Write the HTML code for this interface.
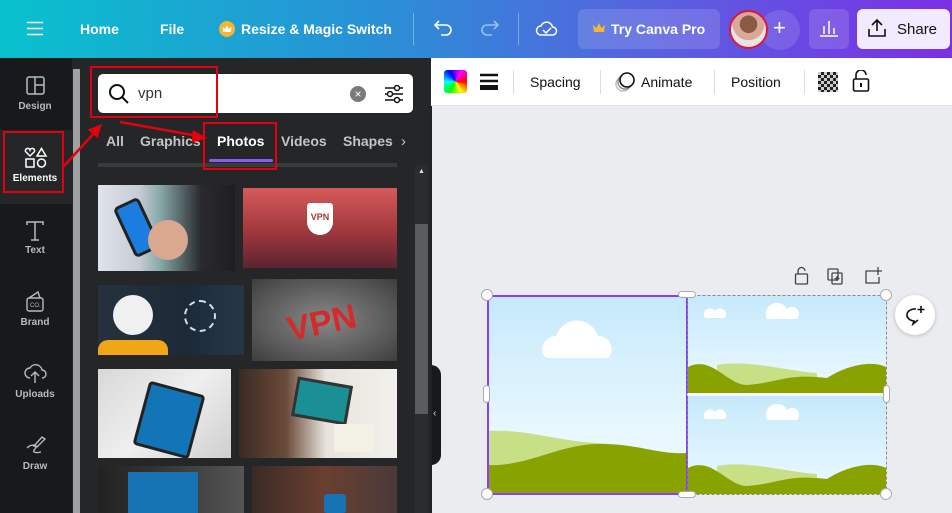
<!DOCTYPE html>
<html><head><meta charset="utf-8"><style>
*{box-sizing:border-box;margin:0;padding:0}
body{width:952px;height:513px;overflow:hidden;font-family:"Liberation Sans",sans-serif;background:#ebecf0;position:relative}
.abs{position:absolute}
.top{left:0;top:0;width:952px;height:58px;background:linear-gradient(90deg,#08c1cd 0%,#2a8fd6 40%,#5a5fe0 70%,#7b2fe6 100%);color:#fff;font-weight:bold;font-size:14px}
.top span{position:absolute;top:21px}
.side{left:0;top:58px;width:72px;height:455px;background:#18191b}
.si{position:absolute;left:0;width:70px;text-align:center;color:#b9babd;font-size:10px;font-weight:bold}
.panel{left:80px;top:58px;width:351px;height:455px;background:#252627}
.img{position:absolute}
.tab{position:absolute;top:133px;color:#c3c4c7;font-weight:bold;font-size:14px}
.red{position:absolute;border:2px solid #e3000f}
.tb{position:absolute;top:74px;font-size:14px;color:#111}
.div{position:absolute;width:1px;background:#ddd}
.h{position:absolute;width:12px;height:12px;border-radius:50%;background:#fff;border:1px solid #aaa}
</style></head><body>
<div class="abs top">
  <svg class="abs" style="left:27px;top:21px" width="16" height="15"><path d="M0 1.5H16M0 7.5H16M0 13.5H16" stroke="#fff" stroke-width="1.6"/></svg>
  <span style="left:80px">Home</span>
  <span style="left:160px">File</span>
  <div class="abs" style="left:219px;top:21px;width:16px;height:16px;border-radius:50%;background:#f5b731"><svg width="16" height="16"><path d="M4 11L3.5 5.5 6 8 8 4.5 10 8 12.5 5.5 12 11Z" fill="#fff"/></svg></div>
  <span style="left:241px">Resize &amp; Magic Switch</span>
  <div class="abs" style="left:413px;top:13px;width:1px;height:32px;background:rgba(255,255,255,.35)"></div>
  <svg class="abs" style="left:433px;top:19px" width="20" height="18"><path d="M6 2L2 6 6 10M2 6H13a5 5 0 0 1 0 10H8" fill="none" stroke="#fff" stroke-width="1.6"/></svg>
  <svg class="abs" style="left:480px;top:19px" width="20" height="18"><path d="M14 2L18 6 14 10M18 6H7a5 5 0 0 0 0 10H12" fill="none" stroke="rgba(255,255,255,.5)" stroke-width="1.6"/></svg>
  <div class="abs" style="left:518px;top:13px;width:1px;height:32px;background:rgba(255,255,255,.35)"></div>
  <svg class="abs" style="left:535px;top:18px" width="24" height="20"><path d="M6 17a4.5 4.5 0 0 1 0-9 6 6 0 0 1 11.5 1 4 4 0 0 1 0 8Z M8 12l3 3 5-5" fill="none" stroke="#fff" stroke-width="1.5"/></svg>
  <div class="abs" style="left:578px;top:9px;width:142px;height:40px;border-radius:6px;background:rgba(255,255,255,.14)"></div>
  <svg class="abs" style="left:592px;top:22px" width="14" height="12"><path d="M2 10L1 3 4.5 6 7 1 9.5 6 13 3 12 10Z" fill="#f5b731"/></svg>
  <span style="left:611px">Try Canva Pro</span>
  <div class="abs" style="left:760px;top:10px;width:40px;height:40px;border-radius:50%;background:rgba(255,255,255,.12)"></div>
  <span style="left:773px;top:15px;font-size:22px;font-weight:normal">+</span>
  <div class="abs" style="left:729px;top:10px;width:39px;height:39px;border-radius:50%;border:2px solid #e0153a;background:radial-gradient(circle at 50% 35%,#8a5a45 0 30%,#d9a89a 31% 55%,#e9e4e4 56%)"></div>
  <div class="abs" style="left:809px;top:9px;width:40px;height:40px;border-radius:6px;background:rgba(255,255,255,.14)"></div>
  <svg class="abs" style="left:819px;top:19px" width="20" height="18"><path d="M1 17H19M5 15V7M10 15V2M15 15V9" stroke="#fff" stroke-width="1.5"/></svg>
  <div class="abs" style="left:857px;top:9px;width:93px;height:40px;border-radius:6px;background:#f1ebfd"></div>
  <svg class="abs" style="left:867px;top:18px" width="20" height="20"><path d="M2 11V18H18V11M10 13V2M5 7L10 2 15 7" fill="none" stroke="#111" stroke-width="1.6"/></svg>
  <span style="left:897px;color:#111;font-weight:normal;font-size:15px">Share</span>
</div>

<div class="abs side">
  <div class="abs" style="left:0;top:146px;width:72px;height:309px;background:#18191b;border-top-right-radius:10px"></div>
  <div class="abs" style="left:0;top:72px;width:72px;height:74px;background:#252627"></div>
  <svg class="abs" style="left:26px;top:18px" width="19" height="19"><rect x="1" y="1" width="17" height="17" rx="2" fill="none" stroke="#b9babd" stroke-width="1.5"/><path d="M9 1V18M9 9H18" stroke="#b9babd" stroke-width="1.5"/></svg>
  <div class="si" style="top:43px">Design</div>
  <svg class="abs" style="left:24px;top:89px" width="24" height="22"><path d="M6 9L1.5 4.5a2.3 2.3 0 0 1 4.5-1.5 2.3 2.3 0 0 1 4.5 1.5Z M17.5 1.5L22 9H13Z" fill="none" stroke="#fff" stroke-width="1.5"/><rect x="2" y="12" width="8" height="8" fill="none" stroke="#fff" stroke-width="1.5"/><circle cx="17.5" cy="16" r="4" fill="none" stroke="#fff" stroke-width="1.5"/></svg>
  <div class="si" style="top:115px;color:#fff">Elements</div>
  <svg class="abs" style="left:26px;top:163px" width="18" height="20"><path d="M1 4V1H17V4M9 1V19M5 19H13" fill="none" stroke="#b9babd" stroke-width="1.5"/></svg>
  <div class="si" style="top:187px">Text</div>
  <svg class="abs" style="left:25px;top:232px" width="20" height="24"><path d="M4 8L13 2 15 8" fill="none" stroke="#b9babd" stroke-width="1.4"/><rect x="2" y="8" width="16" height="13" rx="2" fill="none" stroke="#b9babd" stroke-width="1.4"/><text x="5" y="17" font-size="6" fill="#b9babd">CO.</text></svg>
  <div class="si" style="top:259px">Brand</div>
  <svg class="abs" style="left:23px;top:304px" width="24" height="22"><path d="M7 16a5 5 0 0 1 0-10 6.5 6.5 0 0 1 12 2 4 4 0 0 1 0 8M12 21V11M8 14L12 10 16 14" fill="none" stroke="#b9babd" stroke-width="1.4"/></svg>
  <div class="si" style="top:331px">Uploads</div>
  <svg class="abs" style="left:25px;top:376px" width="22" height="22"><path d="M2 14C6 10 14 10 10 15 6 19 12 19 16 18M9 12L17 3 20 5 12 13Z" fill="none" stroke="#b9babd" stroke-width="1.4"/></svg>
  <div class="si" style="top:403px">Draw</div>
</div>
<div class="abs" style="left:72px;top:58px;width:8px;height:455px;background:#252627"></div>
<div class="abs" style="left:73px;top:69px;width:7px;height:444px;background:#9fa0a2"></div>

<div class="abs panel"></div>
<div class="abs" style="left:98px;top:74px;width:315px;height:39px;border-radius:5px;background:#fff"></div>
<svg class="abs" style="left:108px;top:83px" width="22" height="22"><circle cx="9" cy="9" r="7" fill="none" stroke="#111" stroke-width="2"/><path d="M14 14L20 20" stroke="#111" stroke-width="2"/></svg>
<div class="abs" style="left:138px;top:85px;font-size:15px;color:#333">vpn</div>
<div class="abs" style="left:350px;top:86px;width:16px;height:16px;border-radius:50%;background:#7a7a7a;color:#fff;font-size:12px;text-align:center;line-height:16px">×</div>
<svg class="abs" style="left:384px;top:84px" width="20" height="20"><path d="M1 4H19M1 10H19M1 16H19" stroke="#111" stroke-width="1.5"/><circle cx="13" cy="4" r="2.5" fill="#fff" stroke="#111" stroke-width="1.5"/><circle cx="6" cy="10" r="2.5" fill="#fff" stroke="#111" stroke-width="1.5"/><circle cx="13" cy="16" r="2.5" fill="#fff" stroke="#111" stroke-width="1.5"/></svg>
<div class="tab" style="left:106px">All</div>
<div class="tab" style="left:140px">Graphics</div>
<div class="tab" style="left:217px;color:#fff">Photos</div>
<div class="tab" style="left:281px">Videos</div>
<div class="tab" style="left:343px">Shapes</div>
<div class="abs" style="left:401px;top:133px;color:#c3c4c7;font-size:15px">›</div>
<div class="abs" style="left:209px;top:159px;width:64px;height:3px;border-radius:2px;background:#8b5cf6"></div>
<div class="abs" style="left:98px;top:163px;width:299px;height:4px;background:#3a3b3d"></div>
<div class="abs" style="left:415px;top:165px;width:13px;height:348px;background:#2b2c2e"></div>
<div class="abs" style="left:415px;top:224px;width:13px;height:190px;background:#5b5c5e"></div>
<div class="abs" style="left:418px;top:168px;color:#ddd;font-size:7px">▲</div>

<div class="img" style="left:98px;top:185px;width:137px;height:86px;background:linear-gradient(90deg,#dfe3ea 0%,#c7ccd4 30%,#8aa 45%,#2a2a2f 75%,#1e1e22)"><div class="abs" style="left:25px;top:15px;width:28px;height:55px;background:#1b7de0;border:3px solid #222;border-radius:5px;transform:rotate(-25deg)"></div><div class="abs" style="left:50px;top:35px;width:40px;height:40px;border-radius:50%;background:#d9a88e"></div></div>
<div class="img" style="left:243px;top:188px;width:154px;height:80px;background:linear-gradient(180deg,#d65a5a,#a0373d 55%,#5a2430)"><div class="abs" style="left:64px;top:15px;width:26px;height:32px;background:#fff;border-radius:3px 3px 13px 13px;font-size:9px;font-weight:bold;text-align:center;line-height:28px;color:#a33">VPN</div></div>
<div class="img" style="left:98px;top:285px;width:146px;height:70px;background:linear-gradient(90deg,#26313c,#1c2a38 60%,#273646)"><div class="abs" style="left:15px;top:10px;width:40px;height:40px;border-radius:50%;background:#f0f0f0"></div><div class="abs" style="left:0;top:55px;width:70px;height:15px;background:#f0a616;border-radius:10px 10px 0 0"></div><div class="abs" style="left:86px;top:15px;width:32px;height:32px;border-radius:50%;border:2px dashed #cde"></div></div>
<div class="img" style="left:252px;top:279px;width:145px;height:82px;background:radial-gradient(ellipse at 50% 50%,#888,#555 70%,#3d3d3d)"><div class="abs" style="left:35px;top:25px;color:#d42a2a;font-weight:bold;font-size:34px;transform:rotate(-12deg)">VPN</div></div>
<div class="img" style="left:98px;top:369px;width:133px;height:89px;background:linear-gradient(135deg,#d8d8d8,#efefef 50%,#cfcfcf)"><div class="abs" style="left:42px;top:18px;width:58px;height:66px;background:#1474b8;border:3px solid #222;border-radius:4px;transform:rotate(15deg)"></div></div>
<div class="img" style="left:239px;top:369px;width:158px;height:89px;background:linear-gradient(90deg,#3a2a22 0%,#6b4b3a 30%,#e8e4dc 55%,#f2f0ec)"><div class="abs" style="left:55px;top:12px;width:56px;height:40px;background:#1a8f96;border:3px solid #333;transform:rotate(10deg)"></div><div class="abs" style="left:95px;top:55px;width:40px;height:28px;background:#f3f0e6"></div></div>
<div class="img" style="left:98px;top:466px;width:146px;height:47px;background:linear-gradient(90deg,#222,#333 40%,#555)"><div class="abs" style="left:30px;top:6px;width:70px;height:41px;background:#1674b4"></div></div>
<div class="img" style="left:252px;top:466px;width:145px;height:47px;background:linear-gradient(90deg,#3a2a26,#6a3f30 50%,#4a3a3a)"><div class="abs" style="left:72px;top:28px;width:22px;height:19px;background:#1674b4;border-radius:3px"></div></div>

<div class="red" style="left:90px;top:66px;width:128px;height:52px"></div>
<div class="red" style="left:203px;top:122px;width:74px;height:48px"></div>
<div class="red" style="left:3px;top:131px;width:61px;height:62px"></div>
<svg class="abs" style="left:0;top:0" width="440" height="200"><g stroke="#e3000f" stroke-width="2.5" fill="#e3000f"><path d="M64 166L96 131" /><path d="M100 126L90 130 97 136Z"/><path d="M120 122L198 136"/><path d="M204 138L194 132 193 141Z"/></g></svg>

<div class="abs" style="left:431px;top:58px;width:521px;height:48px;background:#fff;border-bottom:1px solid #e2e3e6"></div>
<div class="abs" style="left:444px;top:70px;width:23px;height:23px;border-radius:3px;background:conic-gradient(from 90deg,#f00,#ff0,#0f0,#0ff,#00f,#f0f,#f00)"></div>
<svg class="abs" style="left:480px;top:73px" width="18" height="17"><path d="M0 2H18M0 8H18" stroke="#111" stroke-width="2.5"/><rect x="0" y="12" width="18" height="5" fill="#111"/></svg>
<div class="div" style="left:513px;top:70px;height:24px"></div>
<div class="tb" style="left:530px">Spacing</div>
<div class="div" style="left:600px;top:70px;height:24px"></div>
<svg class="abs" style="left:614px;top:71px" width="24" height="22"><circle cx="9" cy="13" r="7" fill="none" stroke="#bbb" stroke-width="1.4"/><circle cx="11" cy="11" r="7" fill="#fff" stroke="#888" stroke-width="1.4"/><circle cx="13" cy="9" r="7" fill="#fff" stroke="#111" stroke-width="1.6"/></svg>
<div class="tb" style="left:641px">Animate</div>
<div class="div" style="left:714px;top:70px;height:24px"></div>
<div class="tb" style="left:731px">Position</div>
<div class="div" style="left:804px;top:70px;height:24px"></div>
<div class="abs" style="left:818px;top:72px;width:20px;height:20px;background:repeating-conic-gradient(#222 0 25%,#ccc 0 50%) 0 0/6px 6px"></div>
<svg class="abs" style="left:852px;top:70px" width="18" height="22"><path d="M4 9V5a5 5 0 0 1 10 0" fill="none" stroke="#111" stroke-width="1.6"/><rect x="1.5" y="9" width="15" height="12" rx="1.5" fill="none" stroke="#111" stroke-width="1.6"/><path d="M9 13V17" stroke="#111" stroke-width="2"/></svg>

<div class="abs" style="left:431px;top:365px;width:10px;height:100px;background:#18191b;border-radius:0 10px 10px 0"></div>
<div class="abs" style="left:433px;top:408px;color:#ddd;font-size:10px">‹</div>
<div class="abs" style="left:430px;top:106px;width:2px;height:407px;background:#222"></div>

<svg class="abs" style="left:794px;top:266px" width="90" height="20"><g fill="none" stroke="#444" stroke-width="1.3"><path d="M4 8V5a3.5 3.5 0 0 1 7 0"/><rect x="1.5" y="8" width="12" height="10" rx="1"/><rect x="34" y="3" width="10" height="11" rx="1"/><rect x="38" y="7" width="10" height="11" rx="1"/><path d="M43 10V15M40.5 12.5H45.5"/><path d="M80 5H72V17H85V11M84 1V9M80 5H88"/></g></svg>

<div class="abs" style="left:487px;top:295px;width:200px;height:199px;background:linear-gradient(180deg,#c5e9fb,#e9f8fe 70%)"></div>
<svg class="abs" style="left:487px;top:295px" width="400" height="200">
<defs><linearGradient id="s" x1="0" y1="0" x2="0" y2="1"><stop offset="0" stop-color="#c5e9fb"/><stop offset="1" stop-color="#eefaff"/></linearGradient></defs>
<path d="M55 55a14 14 0 0 1 14-14 22 22 0 0 1 42 0a13 13 0 0 1 10 22H60a9 9 0 0 1-5-8Z" fill="#fff"/>
<path d="M0 136C40 134 70 146 110 148 150 150 180 160 200 165V200H0Z" fill="#c7df85"/>
<path d="M0 170C40 172 70 150 110 149 150 148 170 160 200 158V200H0Z" fill="#88a300"/>
<rect x="201" y="0" width="198" height="98" fill="url(#s)"/>
<rect x="201" y="101" width="198" height="98" fill="url(#s)"/>
<g fill="#fff"><path d="M218 23a6 6 0 0 1 10-7 6 6 0 0 1 10 7Z"/><path d="M280 24a10 10 0 0 1 20-10 7 7 0 0 1 10 10Z"/><path d="M218 124a6 6 0 0 1 10-7 6 6 0 0 1 10 7Z"/><path d="M280 125a10 10 0 0 1 20-10 7 7 0 0 1 10 10Z"/></g>
<path d="M230 70C260 64 300 76 330 78V98H230Z" fill="#c7df85"/>
<path d="M201 72C225 60 240 90 260 90 290 88 300 78 340 83 360 70 385 65 399 72V98H201Z" fill="#88a300"/>
<path d="M230 171C260 165 300 177 330 179V199H230Z" fill="#c7df85"/>
<path d="M201 173C225 161 240 191 260 191 290 189 300 179 340 184 360 171 385 166 399 173V199H201Z" fill="#88a300"/>
<rect x="1" y="1" width="199" height="198" fill="none" stroke="#8b3dff" stroke-width="2"/>
<rect x="200.5" y="0.5" width="199" height="199" fill="none" stroke="#888" stroke-dasharray="3 2"/>
<line x1="200" y1="99.5" x2="400" y2="99.5" stroke="#fff" stroke-width="2"/>
</svg>
<div class="h" style="left:481px;top:289px"></div><div class="h" style="left:880px;top:289px"></div>
<div class="h" style="left:481px;top:488px"></div><div class="h" style="left:880px;top:488px"></div>
<div class="abs" style="left:678px;top:291px;width:18px;height:7px;border-radius:4px;background:#fff;border:1px solid #aaa"></div>
<div class="abs" style="left:678px;top:491px;width:18px;height:7px;border-radius:4px;background:#fff;border:1px solid #aaa"></div>
<div class="abs" style="left:483px;top:385px;width:7px;height:18px;border-radius:4px;background:#fff;border:1px solid #aaa"></div>
<div class="abs" style="left:883px;top:385px;width:7px;height:18px;border-radius:4px;background:#fff;border:1px solid #aaa"></div>
<div class="abs" style="left:895px;top:295px;width:40px;height:40px;border-radius:50%;background:#fff;box-shadow:0 1px 4px rgba(0,0,0,.2)"></div>
<svg class="abs" style="left:904px;top:304px" width="22" height="22"><path d="M12 5A8 6 0 1 0 10 17L9 20 14 16" fill="none" stroke="#111" stroke-width="1.6"/><path d="M17 2V9M13.5 5.5H20.5" stroke="#111" stroke-width="1.6"/></svg>
</body></html>
